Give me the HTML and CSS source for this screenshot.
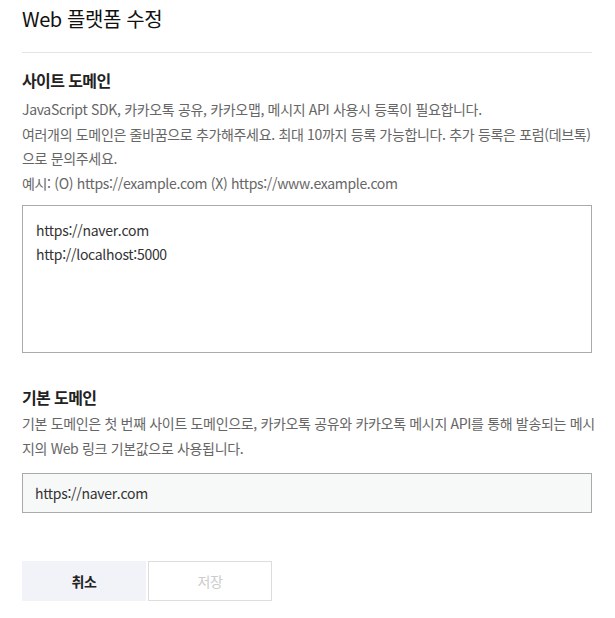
FILE: index.html
```html
<!DOCTYPE html>
<html lang="ko">
<head>
<meta charset="utf-8">
<title>Web 플랫폼 수정</title>
<link rel="stylesheet" href="styles.css">
</head>
<body>
<div class="page">
  <h1 class="title">Web 플랫폼 수정</h1>
  <section class="field">
    <h2 class="field-label">사이트 도메인</h2>
    <p class="field-desc">JavaScript SDK, 카카오톡 공유, 카카오맵, 메시지 API 사용시 등록이 필요합니다.<br>여러개의 도메인은 줄바꿈으로 추가해주세요. 최대 10까지 등록 가능합니다. 추가 등록은 포럼(데브톡)<br>으로 문의주세요.<br>예시: (O) https://example.com (X) https://www.example.com</p>
    <textarea class="domains">https://naver.com
http://localhost:5000</textarea>
  </section>
  <section class="field field-second">
    <h2 class="field-label">기본 도메인</h2>
    <p class="field-desc field-desc-tight">기본 도메인은 첫 번째 사이트 도메인으로, 카카오톡 공유와 카카오톡 메시지 API를 통해 발송되는 메시<br>지의 Web 링크 기본값으로 사용됩니다.</p>
    <input class="default-domain" type="text" value="https://naver.com">
  </section>
  <div class="actions">
    <button class="btn btn-cancel" type="button">취소</button>
    <button class="btn btn-save" type="button">저장</button>
  </div>
</div>
</body>
</html>
```
FILE: styles.css
```css
* { box-sizing: border-box; }
html, body { margin: 0; padding: 0; background: #fff; }
body {
  font-family: "Noto Sans CJK KR", "Noto Sans", sans-serif;
  color: #222;
}
.page {
  width: 615px;
  padding: 0 23px 0 22px;
}
.title {
  margin: 0;
  padding: 4px 0 18px;
  font-size: 20px;
  line-height: 30px;
  font-weight: 400;
  letter-spacing: -0.4px;
  color: #111;
  border-bottom: 1px solid #e4e4e4;
}
.field { display: flex; flex-direction: column; }
.field-label {
  margin: 15px 0 0;
  font-size: 16px;
  line-height: 24px;
  font-weight: 700;
  letter-spacing: -0.6px;
  color: #222;
}
.field-second .field-label { margin-top: 32px; }
.field-desc {
  margin: 5px 0 0;
  font-size: 14px;
  line-height: 24.5px;
  letter-spacing: -0.33px;
  color: #666;
  white-space: nowrap;
}
.field-desc-tight { margin-top: 2px; }
.domains {
  margin-top: 10px;
  width: 100%;
  height: 148px;
  padding: 12px 13px;
  border: 1px solid #aaa;
  border-radius: 0;
  font-family: inherit;
  font-size: 14px;
  line-height: 24px;
  letter-spacing: -0.3px;
  color: #333;
  resize: none;
  outline: none;
  background: #fff;
}
.default-domain {
  margin-top: 13px;
  width: 100%;
  height: 40px;
  padding: 0 12px;
  border: 1px solid #aaa;
  border-radius: 0;
  background: #f7f8f8;
  font-family: inherit;
  font-size: 14px;
  line-height: 24px;
  letter-spacing: -0.3px;
  color: #333;
  outline: none;
}
.actions {
  display: flex;
  gap: 2px;
  margin-top: 48px;
}
.btn {
  width: 124px;
  height: 40px;
  padding: 0;
  border-radius: 0;
  font-family: inherit;
  font-size: 14px;
  letter-spacing: -0.3px;
  cursor: pointer;
}
.btn-cancel {
  background: #f2f3f8;
  border: 1px solid #f2f3f8;
  color: #222;
  font-weight: 700;
}
.btn-save {
  background: #fff;
  border: 1px solid #ddd;
  color: #ccc;
  font-weight: 400;
}
```
